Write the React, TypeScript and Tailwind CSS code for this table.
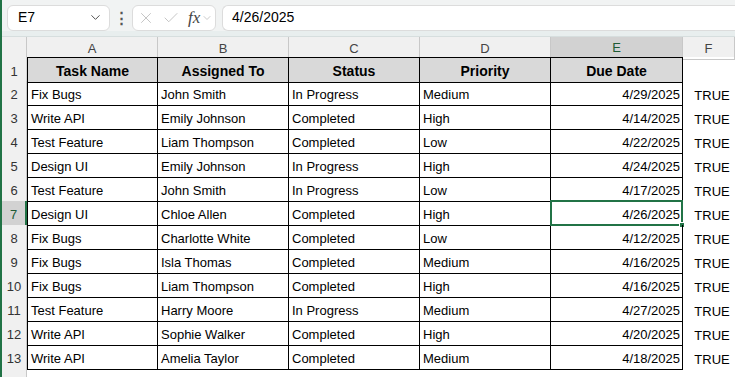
import { ChevronDown, X, Check } from "lucide-react";

const rows = [
  ["Fix Bugs", "John Smith", "In Progress", "Medium", "4/29/2025"],
  ["Write API", "Emily Johnson", "Completed", "High", "4/14/2025"],
  ["Test Feature", "Liam Thompson", "Completed", "Low", "4/22/2025"],
  ["Design UI", "Emily Johnson", "In Progress", "High", "4/24/2025"],
  ["Test Feature", "John Smith", "In Progress", "Low", "4/17/2025"],
  ["Design UI", "Chloe Allen", "Completed", "High", "4/26/2025"],
  ["Fix Bugs", "Charlotte White", "Completed", "Low", "4/12/2025"],
  ["Fix Bugs", "Isla Thomas", "Completed", "Medium", "4/16/2025"],
  ["Fix Bugs", "Liam Thompson", "Completed", "High", "4/16/2025"],
  ["Test Feature", "Harry Moore", "In Progress", "Medium", "4/27/2025"],
  ["Write API", "Sophie Walker", "Completed", "High", "4/20/2025"],
  ["Write API", "Amelia Taylor", "Completed", "Medium", "4/18/2025"],
];

const headers = ["Task Name", "Assigned To", "Status", "Priority", "Due Date"];
const cols = ["A", "B", "C", "D", "E", "F"];
const grid = "grid grid-cols-[25px_131px_131px_131px_131px_132px_1fr]";

export default function App() {
  return (
    <div className="flex h-[377px] w-[735px] overflow-hidden bg-white font-['Liberation_Sans',Arial,sans-serif] text-[13px] text-black">
      <div className="w-[2px] shrink-0 bg-[#217346]" />
      <div className="flex min-w-0 flex-1 flex-col">
        {/* formula bar */}
        <div className="flex h-[32px] items-center bg-[#f1f3f3] pl-[5px] pt-[4px]">
          <div className="flex h-[26px] w-[103px] items-center justify-between rounded-md border border-[#dcdcdc] bg-white pl-[10px] pr-[6px] text-[14px]">
            <span>E7</span>
            <ChevronDown size={15} strokeWidth={1.5} className="text-[#444]" />
          </div>
          <span className="mx-[4px] w-[14px] text-center text-[15px] font-bold leading-none text-[#555]">⋮</span>
          <div className="flex h-[26px] w-[84px] items-center rounded-md border border-[#dcdcdc] bg-white pl-[4px] text-[#b8b8b8]">
            <X size={18} strokeWidth={1.1} />
            <Check size={18} strokeWidth={1.1} className="ml-[7px]" />
            <span className="ml-[8px] font-['Liberation_Serif',serif] text-[17px] italic text-[#444]">fx</span>
            <ChevronDown size={12} strokeWidth={1.5} className="ml-[1px]" />
          </div>
          <div className="ml-[6px] flex h-[26px] flex-1 items-center rounded-l-md border border-r-0 border-[#dcdcdc] bg-white pl-[9px] text-[14px]">
            4/26/2025
          </div>
        </div>
        <div className="h-[6px] border-b border-[#d6dede] bg-[#e8eeee]" />
        {/* column headers */}
        <div className={`${grid} h-[20px] bg-[#f0f0f0] text-[#444]`}>
          <div className="border-r border-b border-[#c8c8c8] bg-[#f0f0f0]" />
          {cols.map((c) =>
            c === "E" ? (
              <div key={c} className="flex items-center justify-center border-r border-[#c8c8c8] border-b-2 border-b-[#217346] bg-[#d2d2d2] pt-[1px] text-[#1e5b35]">
                {c}
              </div>
            ) : (
              <div key={c} className="flex items-center justify-center border-r border-b border-[#c8c8c8] pt-[1px]">
                {c}
              </div>
            )
          )}
          <div className="border-b border-[#c8c8c8]" />
        </div>
        {/* row 1 */}
        <div className={`${grid} h-[24px]`}>
          <div className="flex items-center justify-center border-r border-b border-[#d4d4d4] bg-[#f0f0f0] pt-[4px] text-[#333]">1</div>
          {headers.map((h, i) => (
            <div key={h} className={`flex items-center justify-center border-t border-r border-b border-black bg-[#d9d9d9] pt-[3px] text-[14px] font-bold ${i === 0 ? "border-l" : ""}`}>
              {h}
            </div>
          ))}
          <div />
          <div />
        </div>
        {rows.map((r, ri) => {
          const n = ri + 2;
          const sel = n === 7;
          return (
            <div key={n} className={`${grid} h-[24px]`}>
              <div className={`flex items-center justify-center border-b border-[#d4d4d4] pt-[4px] ${sel ? "border-r-2 border-r-[#217346] bg-[#d2d2d2] text-[#1e5b35]" : "border-r border-r-[#c8c8c8] bg-[#f0f0f0] text-[#333]"}`}>
                {n}
              </div>
              {r.map((v, ci) =>
                ci === 4 ? (
                  <div key={ci} className="relative flex items-center justify-end border-r border-b border-black px-[2px] pt-[4px]">
                    {sel && (
                      <div className="absolute -top-[1px] -left-[1px] -right-[1px] -bottom-[1px] border-2 border-[#217346]">
                        <div className="absolute -right-[4px] -bottom-[4px] h-[6px] w-[6px] border border-white bg-[#217346]" />
                      </div>
                    )}
                    {v}
                  </div>
                ) : (
                  <div key={ci} className={`flex items-center border-r border-b border-black px-[3px] pt-[4px] ${ci === 0 ? "border-l" : ""}`}>
                    {v}
                  </div>
                )
              )}
              <div className="flex items-center justify-center pt-[4px] pl-[6px]">TRUE</div>
              <div />
            </div>
          );
        })}
        <div className={`${grid} h-[8px]`}>
          <div className="border-r border-[#c8c8c8] bg-[#f0f0f0]" />
        </div>
      </div>
    </div>
  );
}
